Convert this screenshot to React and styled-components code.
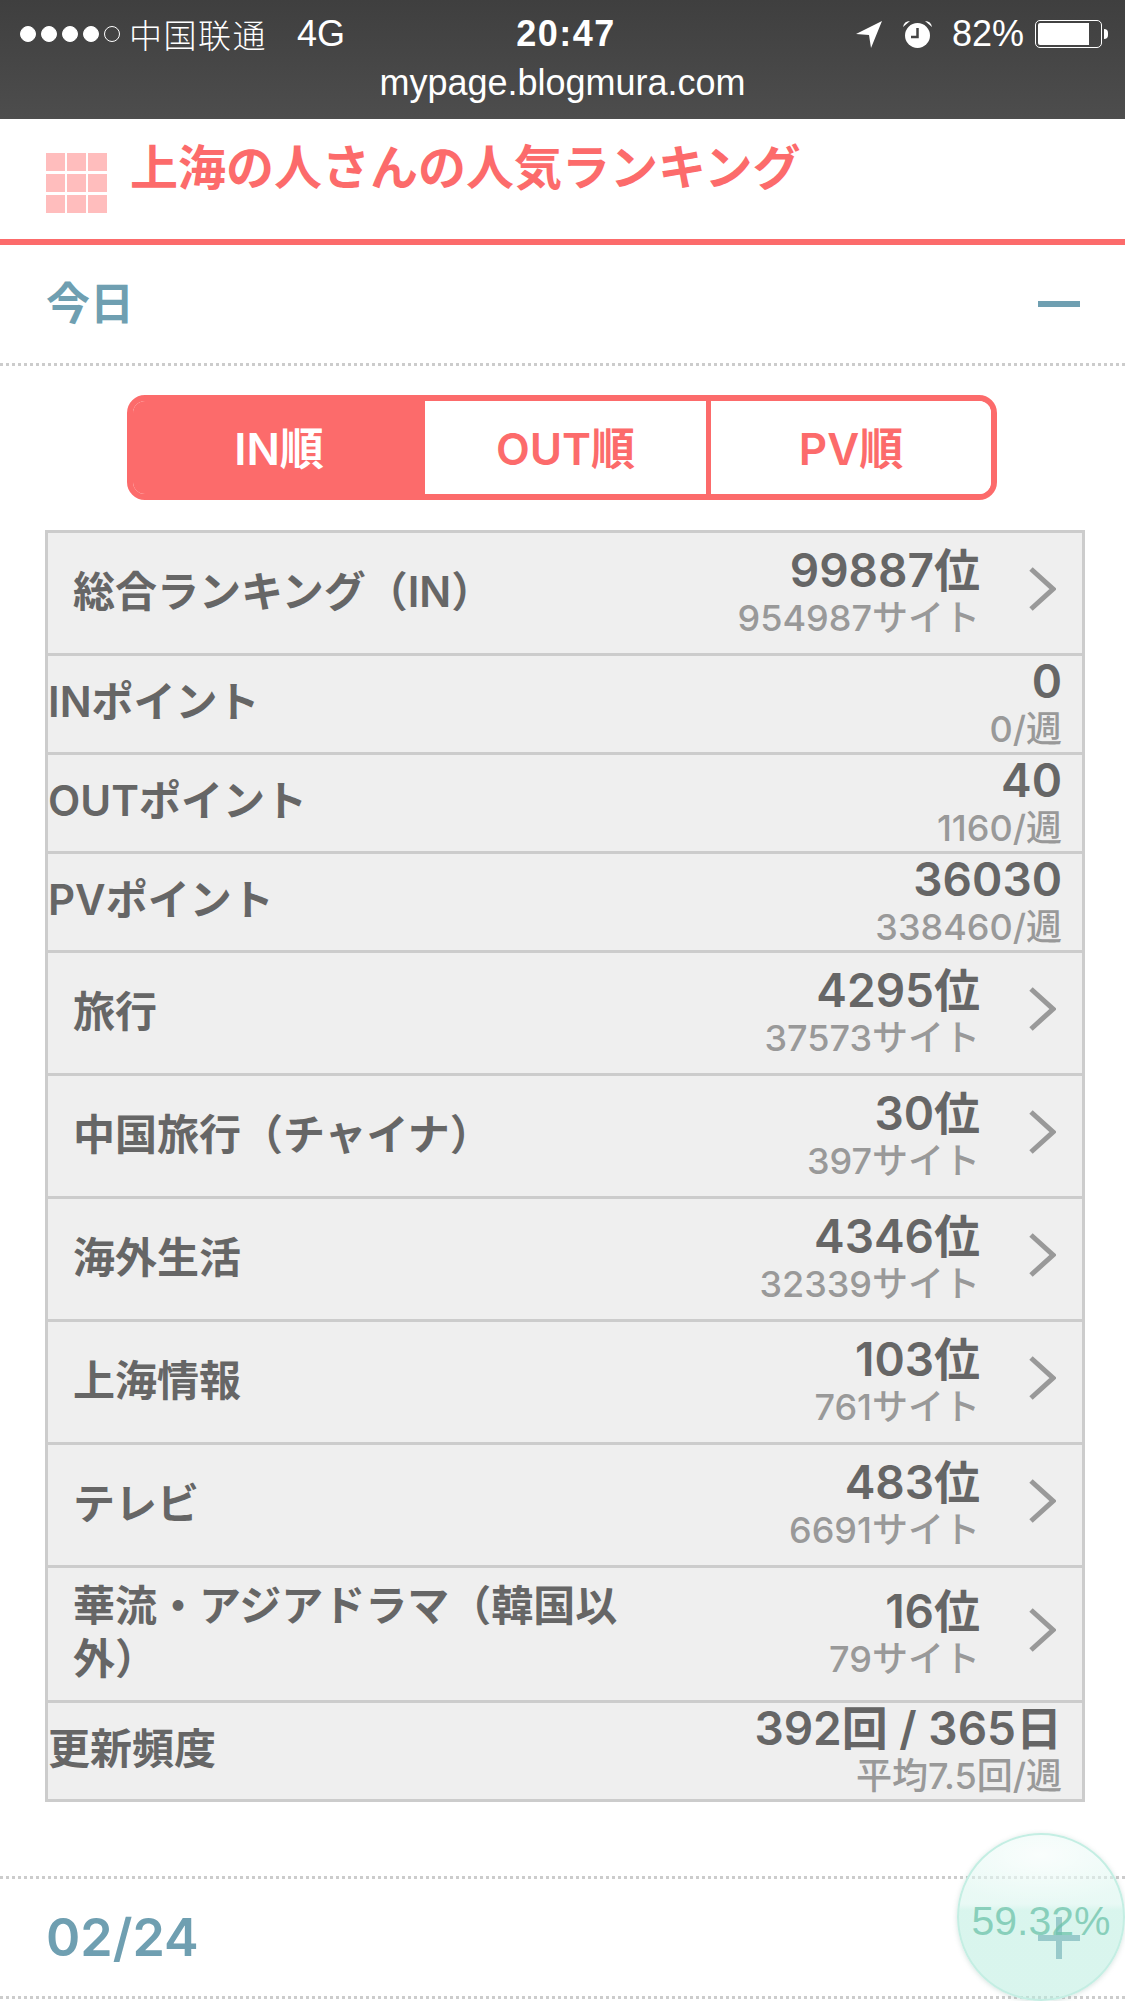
import React from 'react'
import styled, { createGlobalStyle } from 'styled-components'

const SANS = '"Liberation Sans", "Noto Sans CJK JP", sans-serif'
const BOLD = 'Inter, "Noto Sans CJK JP", sans-serif'

const Global = createGlobalStyle`
  html, body { margin: 0; padding: 0; background: #fff; }
  #root { width: 1125px; height: 2001px; overflow: hidden; }
`

const Page = styled.div`
  position: relative;
  width: 1125px;
  height: 2001px;
  overflow: hidden;
  background: #fff;
  font-family: ${SANS};
`

// ---- status bar
const StatusBar = styled.div`
  height: 119px;
  box-sizing: border-box;
  padding-top: 10px;
  background: linear-gradient(#3f3f3f, #4d4d4d);
  color: #fff;
`
const StatusRow = styled.div`
  display: grid;
  grid-template-columns: 1fr auto 1fr;
  align-items: center;
  height: 36px;
  padding: 0 23px 0 20px;
  font-size: 36px;
`
const StatusLeft = styled.div`
  display: flex;
  align-items: center;
`
const Dots = styled.div`
  display: flex;
  gap: 5px;
  margin-right: 9px;
`
const Dot = styled.span`
  width: 16px;
  height: 16px;
  box-sizing: border-box;
  border-radius: 50%;
  border: 1.5px solid #fff;
  background: ${p => (p.$off ? 'transparent' : '#fff')};
`
const Carrier = styled.span`
  font-family: "Noto Sans CJK SC", sans-serif;
  font-weight: 300;
  font-size: 33px;
  letter-spacing: 1.5px;
  margin-right: 30px;
`
const Clock = styled.div`
  padding-left: 10px;
  font-weight: 700;
  font-size: 36px;
  letter-spacing: 1.5px;
`
const StatusRight = styled.div`
  display: flex;
  align-items: center;
  justify-content: flex-end;
`
const Percent = styled.span`
  margin: 0 11px 0 20px;
`
const Battery = styled.div`
  position: relative;
  width: 67px;
  height: 28px;
  box-sizing: border-box;
  padding: 2px;
  border: 1px solid #fff;
  border-radius: 5px;
`
const BatteryFill = styled.div`
  width: ${p => p.$level}%;
  height: 100%;
  background: #fff;
  border-radius: 2px 0 0 2px;
`
const BatteryNub = styled.div`
  position: absolute;
  right: -7px;
  top: 8px;
  width: 4px;
  height: 10px;
  background: #fff;
  border-radius: 0 4px 4px 0;
`
const Url = styled.div`
  margin-top: 15px;
  text-align: center;
  font-size: 36px;
  line-height: 44px;
`

// ---- page title
const TitleBar = styled.div`
  display: flex;
  align-items: flex-start;
  gap: 23px;
  height: 126px;
  box-sizing: border-box;
  padding: 34px 0 0 46px;
  border-bottom: 6px solid #fc6b6b;
`
const GridIcon = styled.div`
  display: grid;
  grid-template-columns: repeat(3, 19px);
  grid-template-rows: repeat(3, 18px);
  gap: 3px 2px;
`
const GridCell = styled.span`
  background: #ffbdbd;
`
const Title = styled.h1`
  margin: -19px 0 0;
  font-size: 48px;
  font-weight: 700;
  line-height: 70px;
  color: #fc6b6b;
`

// ---- collapsible section head
const SectionHead = styled.div`
  display: flex;
  align-items: center;
  justify-content: space-between;
  height: ${p => p.$h}px;
  padding: 0 45px 0 46px;
  border-bottom: 3px dotted #ccc;
  color: #6f9fb1;
  font-family: ${BOLD};
  font-weight: 600;
`
const SectionLabel = styled.span`
  font-size: ${p => p.$size}px;
  margin-bottom: ${p => p.$lift || 0}px;
`
const Minus = styled.span`
  width: 42px;
  height: 6px;
  background: #6f9fb1;
`
const Plus = styled.span`
  position: relative;
  width: 42px;
  height: 42px;
  &::before, &::after {
    content: '';
    position: absolute;
    background: #6f9fb1;
  }
  &::before { left: 0; right: 0; top: 18px; height: 6px; }
  &::after { top: 0; bottom: 0; left: 18px; width: 6px; }
`
const Spacer = styled.div`
  height: 74px;
  border-bottom: 3px dotted #ccc;
`

// ---- tabs
const Tabs = styled.div`
  display: grid;
  grid-template-columns: 292px 286px 280px;
  width: 870px;
  height: 105px;
  box-sizing: border-box;
  margin: 29px 0 30px 127px;
  border: 6px solid #fc6b6b;
  border-radius: 18px;
  overflow: hidden;
`
const Tab = styled.div`
  display: flex;
  align-items: center;
  justify-content: center;
  padding-bottom: 4px;
  font-family: ${BOLD};
  font-size: 44px;
  font-weight: 600;
  background: ${p => (p.$active ? '#fc6b6b' : '#fff')};
  color: ${p => (p.$active ? '#fff' : '#fc6b6b')};
  &:nth-child(2) { border-right: 5px solid #fc6b6b; }
`

// ---- ranking table
const Table = styled.div`
  width: 1040px;
  box-sizing: border-box;
  margin: 0 0 0 45px;
  border: 3px solid #ccc;
  border-bottom: 0;
  background: #efefef;
  font-family: ${BOLD};
`
const Row = styled.div`
  display: flex;
  align-items: center;
  justify-content: space-between;
  border-bottom: 3px solid #ccc;
  padding: ${p => (p.$link ? '0 26px 0 25px' : '0 20px 0 0')};
  min-height: ${p => (p.$link ? 120 : 96)}px;
  color: #666;
`
const Label = styled.div`
  font-size: 42px;
  font-weight: 600;
  line-height: ${p => (p.$link ? 53 : 50)}px;
  max-width: 560px;
  padding: 11px 0 15px;
`
const RowEnd = styled.div`
  display: flex;
  align-items: center;
`
const Values = styled.div`
  text-align: right;
`
const Value = styled.div`
  font-size: 46px;
  font-weight: 600;
  line-height: 50px;
`
const Sub = styled.div`
  font-size: 36px;
  font-weight: 500;
  line-height: 46px;
  color: #999;
`
const Chevron = styled.svg`
  width: 28px;
  height: 44px;
  margin: -8px 0 0 48px;
  display: block;
`

// ---- floating bubble
const Bubble = styled.div`
  position: absolute;
  left: 957px;
  top: 1833px;
  width: 168px;
  height: 168px;
  box-sizing: border-box;
  border-radius: 50%;
  border: 2px solid #c4eee3;
  background:
    radial-gradient(ellipse 70% 30% at 50% 12%, rgba(255,255,255,.75), rgba(255,255,255,0) 100%),
    linear-gradient(rgba(205,242,232,.4) 0, rgba(205,242,232,.45) 42%, rgba(186,237,223,.55) 46%, rgba(186,237,223,.55) 100%);
  box-shadow: 0 1px 5px rgba(120,160,150,.3);
  display: flex;
  align-items: center;
  justify-content: center;
`
const BubbleText = styled.span`
  margin-top: 8px;
  font-size: 41px;
  color: rgba(110,195,170,.75);
  white-space: nowrap;
`

const rows = [
  { link: true, label: '総合ランキング（IN）', value: '99887位', sub: '954987サイト' },
  { label: 'INポイント', value: '0', sub: '0/週' },
  { label: 'OUTポイント', value: '40', sub: '1160/週' },
  { label: 'PVポイント', value: '36030', sub: '338460/週' },
  { link: true, label: '旅行', value: '4295位', sub: '37573サイト' },
  { link: true, label: '中国旅行（チャイナ）', value: '30位', sub: '397サイト' },
  { link: true, label: '海外生活', value: '4346位', sub: '32339サイト' },
  { link: true, label: '上海情報', value: '103位', sub: '761サイト' },
  { link: true, label: 'テレビ', value: '483位', sub: '6691サイト' },
  { link: true, label: '華流・アジアドラマ（韓国以外）', value: '16位', sub: '79サイト' },
  { label: '更新頻度', value: '392回 / 365日', sub: '平均7.5回/週' },
]

const App = () => {
  return (
    <Page>
      <Global />
      <StatusBar>
        <StatusRow>
          <StatusLeft>
            <Dots>
              <Dot /><Dot /><Dot /><Dot /><Dot $off />
            </Dots>
            <Carrier>中国联通</Carrier>
            <span>4G</span>
          </StatusLeft>
          <Clock>20:47</Clock>
          <StatusRight>
            <svg width="27" height="27" viewBox="0 0 27 27">
              <path d="M26 0 L0 13 L13 14 L15 27 Z" fill="#fff" />
            </svg>
            <svg width="29" height="27" viewBox="0 0 29 27" style={{ marginLeft: 20 }}>
              <circle cx="14.5" cy="14.5" r="12.5" fill="#fff" />
              <path d="M14.5 7 V16 H8" fill="none" stroke="#444" strokeWidth="2.5" />
              <path d="M0 6 Q1 0 7 0 Z M29 6 Q28 0 22 0 Z" fill="#fff" />
            </svg>
            <Percent>82%</Percent>
            <Battery>
              <BatteryFill $level={84} />
              <BatteryNub />
            </Battery>
          </StatusRight>
        </StatusRow>
        <Url>mypage.blogmura.com</Url>
      </StatusBar>

      <TitleBar>
        <GridIcon>
          {Array.from({ length: 9 }).map((_, i) => <GridCell key={i} />)}
        </GridIcon>
        <Title>上海の人さんの人気ランキング</Title>
      </TitleBar>

      <SectionHead $h={118}>
        <SectionLabel $size={44} $lift={6}>今日</SectionLabel>
        <Minus />
      </SectionHead>

      <Tabs>
        <Tab $active>IN順</Tab>
        <Tab>OUT順</Tab>
        <Tab>PV順</Tab>
      </Tabs>

      <Table>
        {rows.map((r, i) => (
          <Row key={i} $link={r.link}>
            <Label $link={r.link}>{r.label}</Label>
            <RowEnd>
              <Values>
                <Value>{r.value}</Value>
                <Sub>{r.sub}</Sub>
              </Values>
              {r.link && (
                <Chevron viewBox="0 0 28 44">
                  <path d="M3 2 L25 22 L3 42" fill="none" stroke="#999" strokeWidth="5" />
                </Chevron>
              )}
            </RowEnd>
          </Row>
        ))}
      </Table>

      <Spacer />
      <SectionHead $h={117}>
        <SectionLabel $size={52}>02/24</SectionLabel>
        <Plus />
      </SectionHead>

      <Bubble>
        <BubbleText>59.32%</BubbleText>
      </Bubble>
    </Page>
  )
}

export default App
